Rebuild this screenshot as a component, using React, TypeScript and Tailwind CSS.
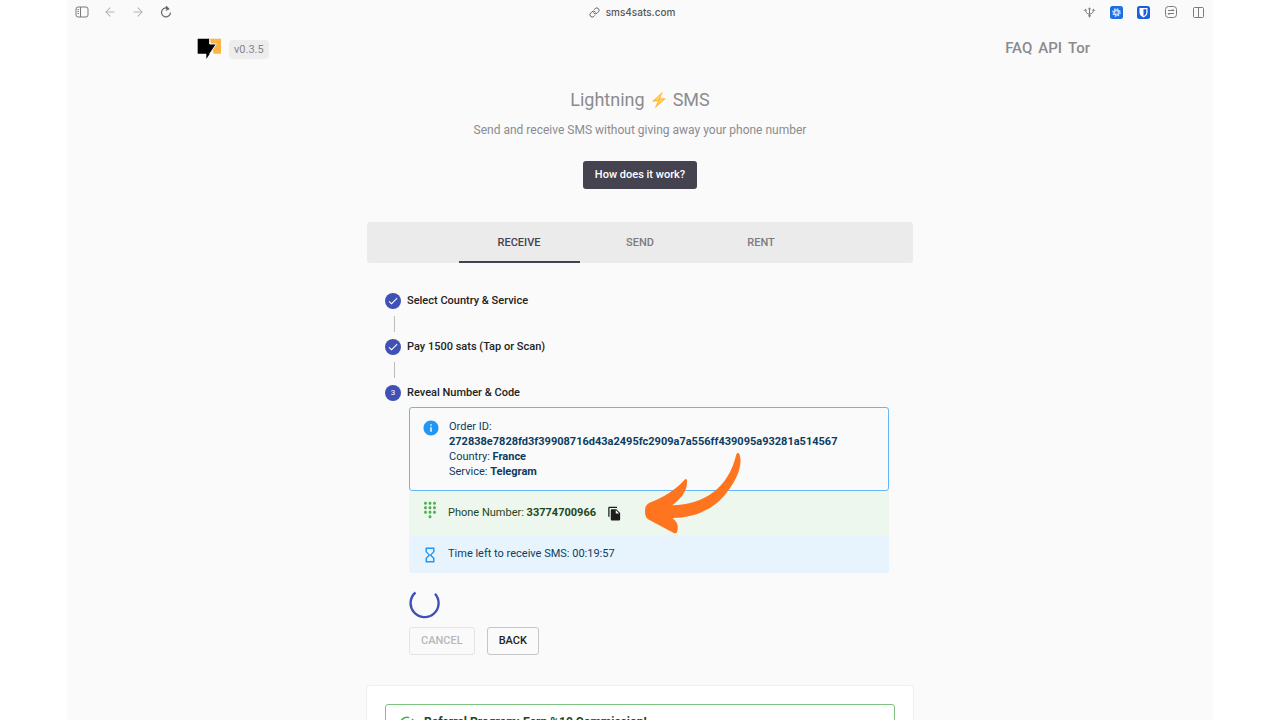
import { useState } from 'react';
import { ArrowLeft, ArrowRight, Link as LinkIcon } from 'lucide-react';
import { MdCheck, MdDialpad, MdFileCopy, MdHourglassEmpty, MdInfo } from 'react-icons/md';

const tabs = ['RECEIVE', 'SEND', 'RENT'];

const order = {
  id: '272838e7828fd3f39908716d43a2495fc2909a7a556ff439095a93281a514567',
  country: 'France',
  service: 'Telegram',
  phone: '33774700966',
  timeLeft: '00:19:57',
};

function BrowserBar() {
  return (
    <div className="grid h-6 grid-cols-[1fr_auto_1fr] items-center pr-2 pl-2 text-[#7a7a7a]">
      <div className="flex items-center gap-[14px]">
        <button type="button" aria-label="Toggle sidebar">
          <svg className="size-[14px]" viewBox="0 0 14 14" fill="none" stroke="currentColor">
            <rect x="1" y="2" width="12" height="10" rx="2" />
            <path d="M5.5 2v10M2.500 4.500h1.500M2.500 6.500h1.500M2.500 8.500h1.500" />
          </svg>
        </button>
        <button type="button" aria-label="Back" className="text-[#b4b4b4]">
          <ArrowLeft className="size-[14px]" strokeWidth={1.8} />
        </button>
        <button type="button" aria-label="Forward" className="text-[#b4b4b4]">
          <ArrowRight className="size-[14px]" strokeWidth={1.8} />
        </button>
        <button type="button" aria-label="Reload" className="text-[#666]">
          <svg className="size-[14px]" viewBox="0 0 14 14" fill="none" stroke="currentColor" strokeWidth="1.200">
            <path d="M10.300 4.300A4.500 4.500 0 1 0 11.500 7.600M7 1.200L9.300 3.500L7 5.600M9.200 3.500H7" />
          </svg>
        </button>
      </div>

      <div className="flex items-center gap-[6px] pr-4 font-[Inter] text-[10px] leading-4 font-medium text-[#555]">
        <LinkIcon className="size-[11px]" strokeWidth={2} />
        <span>sms4sats.com</span>
      </div>

      <div className="flex items-center justify-end gap-[14px]">
        <svg className="size-[13px]" viewBox="0 0 13 13" fill="none" stroke="currentColor" strokeWidth="1">
          <path d="M6.500 2v9.500M2.500 3.500c0 3 1.500 4.500 4 4.500s4-1.500 4-4.500M1 4.800l1.500-1.500L3.800 4.500M9.200 4.500l1.300-1.200L12 4.800M5.200 3.200L6.500 2l1.300 1.200M5 9.800h3" />
        </svg>
        <svg className="size-[13px]" viewBox="0 0 13 13">
          <rect width="13" height="13" rx="2.500" fill="#1f6fe0" />
          <circle cx="6.500" cy="6.500" r="3.200" fill="#b9d8ff" />
          <circle cx="6.500" cy="6.500" r="3.700" fill="none" stroke="#e4f0ff" strokeWidth="1.200" strokeDasharray="1.450 1.450" />
          <circle cx="6.500" cy="6.500" r="1.500" fill="#4b8fea" />
        </svg>
        <svg className="size-[13px]" viewBox="0 0 13 13">
          <rect width="13" height="13" rx="2.500" fill="#1b5fe0" />
          <path d="M2.500 2h8v4.500c0 2.300-1.800 3.900-4 5C4.300 10.400 2.500 8.800 2.500 6.500z" fill="#fff" />
          <path d="M6.500 3.200h2.800v3.300c0 1.600-1.200 2.700-2.800 3.600z" fill="#1b5fe0" />
        </svg>
        <svg className="size-[14px]" viewBox="0 0 14 14" fill="none" stroke="currentColor">
          <rect x="1.500" y="1.500" width="11" height="11" rx="3" />
          <path d="M4 5.500h6M8.500 4L10 5.500M4 8.500h6M4 8.500L5.500 10" />
        </svg>
        <svg className="size-[13px]" viewBox="0 0 13 13" fill="none" stroke="currentColor">
          <rect x="1.500" y="1.500" width="10" height="10" rx="1" />
          <path d="M6.500 1.500v10" />
        </svg>
      </div>
    </div>
  );
}

function Header() {
  return (
    <header className="mx-auto flex w-full max-w-[900px] items-center justify-between pt-[13px] pl-[7px]">
      <div className="flex items-center gap-[7px]">
        <svg className="h-[22px] w-[25px]" viewBox="0 0 75 66" aria-label="sms4sats">
          <path d="M38 5H72V50H50z" fill="#ffb545" />
          <path d="M2 5H38V21H58L28 66V50H2z" fill="#000" />
          <path d="M38 5V21H58L38 51" fill="none" stroke="#fafafa" strokeWidth="3" />
        </svg>
        <span className="mt-[3px] rounded-sm bg-[#ededee] px-[5px] text-[11px] leading-[19px] text-[#85858a]">v0.3.5</span>
      </div>
      <nav className="flex gap-[6px] text-[15px] leading-5 font-medium text-[#8b8b90]">
        <a href="#faq">FAQ</a>
        <a href="#api">API</a>
        <a href="#tor">Tor</a>
      </nav>
    </header>
  );
}

function StepLabel({ label, number, done }: { label: string; number: number; done?: boolean }) {
  return (
    <div className="flex h-4 items-center gap-[6px]">
      <span className="flex size-4 items-center justify-center rounded-full bg-[#3f51b5] text-[8px] text-white">
        {done ? <MdCheck className="size-3" /> : number}
      </span>
      <span className="text-[11px] font-medium text-[#222]">{label}</span>
    </div>
  );
}

function StepConnector() {
  return <div className="my-[7px] ml-[9px] h-4 w-px bg-[#bdbdbd]" />;
}

function OrderDetails() {
  return (
    <div className="relative text-[11px]">
      <div className="flex items-start rounded-[3px] border border-[#64b6f7] px-3 py-[11px] text-[#0d3c61]">
        <MdInfo className="mr-[9px] size-[18px] shrink-0 text-[#2196f3]" />
        <p className="leading-[15px]">
          Order ID:
          <br />
          <strong>{order.id}</strong>
          <br />
          Country: <strong>{order.country}</strong>
          <br />
          Service: <strong>{order.service}</strong>
        </p>
      </div>

      <div className="flex h-11 items-center bg-[#edf7ed] px-3 pt-px text-[#1e4620]">
        <MdDialpad className="mr-[9px] mb-2 size-[18px] shrink-0 text-[#4caf50]" />
        <span>
          Phone Number: <strong>{order.phone}</strong>
        </span>
        <button type="button" aria-label="Copy phone number" className="ml-[11px] text-[#1c1c1c]">
          <MdFileCopy className="size-[15px]" />
        </button>
      </div>

      <div className="flex h-[38px] items-center rounded-b-[3px] bg-[#e8f4fd] px-3 pt-px text-[#0d3c61]">
        <MdHourglassEmpty className="mr-[9px] size-[18px] shrink-0 text-[#2196f3]" />
        <span>Time left to receive SMS: {order.timeLeft}</span>
      </div>

      {/* hand-drawn pointer towards the phone number */}
      <svg className="absolute top-[43px] left-[235px] h-[85px] w-[98px]" viewBox="72 150 294 255" aria-hidden="true">
        <path
          d="M75 334C75 318 81 312 92 307C132 292 168 268 193 240Q199 234 201 241C203 270 187 292 157 316C252 314 325 266 349 163Q354 153 359 164C371 205 340 255 312 288C272 333 216 354 157 354C174 368 176 378 171 396Q169 402 160 398L84 358Q75 353 75 334Z"
          fill="#ff751f"
        />
      </svg>
    </div>
  );
}

export default function App() {
  const [activeTab, setActiveTab] = useState('RECEIVE');

  return (
    <div className="h-screen overflow-y-auto bg-white font-[Roboto,sans-serif] [scrollbar-width:none]">
      <div className="mx-auto min-h-full w-full max-w-[1146px] bg-[#fafafa]">
        <BrowserBar />
        <Header />

        <section className="flex flex-col items-center pt-[29px] text-[#8b8b90]">
          <h1 className="flex items-center gap-[6px] text-[18px] leading-6">
            <span>Lightning</span>
            <svg className="h-[18px] w-4" viewBox="0 0 16 18" aria-hidden="true">
              <path d="M12 0.500L1 10.500L7 10.200L3.500 17.500L15 7.300L9 7.500z" fill="#ffb02e" />
              <path d="M10.500 2.500L3.500 9.300L8.500 9L6 14L12.500 8.300L7.500 8.500z" fill="#ffd75e" />
            </svg>
            <span>SMS</span>
          </h1>
          <p className="mt-2 text-xs leading-5">Send and receive SMS without giving away your phone number</p>
          <button type="button" className="mt-[21px] h-7 rounded-[3px] bg-[#45434f] px-3 text-[11px] font-medium text-white">
            How does it work?
          </button>
        </section>

        <main className="mx-auto w-full max-w-[546px] pt-[33px]">
          <div role="tablist" className="flex h-[41px] justify-center rounded-[3px] bg-[#ebebeb]">
            {tabs.map((tab) => (
              <button
                key={tab}
                type="button"
                role="tab"
                aria-selected={tab === activeTab}
                onClick={() => setActiveTab(tab)}
                className={
                  tab === activeTab
                    ? 'w-[121px] border-b-2 border-[#45434f] pt-1 text-[11px] font-medium text-[#45434f]'
                    : 'w-[121px] border-b-2 border-transparent pt-1 text-[11px] font-medium text-[#7c7c7e]'
                }
              >
                {tab}
              </button>
            ))}
          </div>

          <div className="px-[18px] pt-[30px]">
            <StepLabel number={1} label="Select Country & Service" done />
            <StepConnector />
            <StepLabel number={2} label="Pay 1500 sats (Tap or Scan)" done />
            <StepConnector />
            <StepLabel number={3} label="Reveal Number & Code" />

            <div className="pt-[6px] pr-[6px] pl-6">
              <OrderDetails />
              <svg className="mt-[15px] size-[31px]" viewBox="0 0 31 31" fill="none" aria-label="Loading">
                <path d="M6.500 4.500A14 14 0 1 0 26 5.800" stroke="#3f51b5" strokeWidth="2.400" />
              </svg>
              <div className="mt-2 flex gap-3 text-[11px] font-medium">
                <button type="button" disabled className="h-7 rounded-[3px] border border-[#e4e4e4] px-[11px] pt-px text-[#b8b8b8]">
                  CANCEL
                </button>
                <button type="button" className="h-7 rounded-[3px] border border-[#c6c6c6] px-[11px] pt-px text-[#222]">
                  BACK
                </button>
              </div>
            </div>
          </div>

          <section className="mt-[31px] rounded-t-[3px] bg-white p-[18px] shadow-[0_0_2px_rgba(0,0,0,0.15)]">
            <div className="flex items-start rounded-[3px] border border-[#7cc47f] px-3 py-[10px] text-[#1e4620]">
              <svg className="mr-2 size-[18px] shrink-0" viewBox="0 0 24 24" fill="#4caf50" aria-hidden="true">
                <path d="M20 12a8 8 0 1 1-5.800-7.690l1.570-1.570A10 10 0 1 0 22 12zM7.910 10.080L6.500 11.500 11 16 21 6l-1.410-1.420L11 13.170z" />
              </svg>
              <h2 className="text-xs leading-[14px] font-bold">Referral Program: Earn %10 Commission!</h2>
            </div>
          </section>
        </main>
      </div>
    </div>
  );
}
